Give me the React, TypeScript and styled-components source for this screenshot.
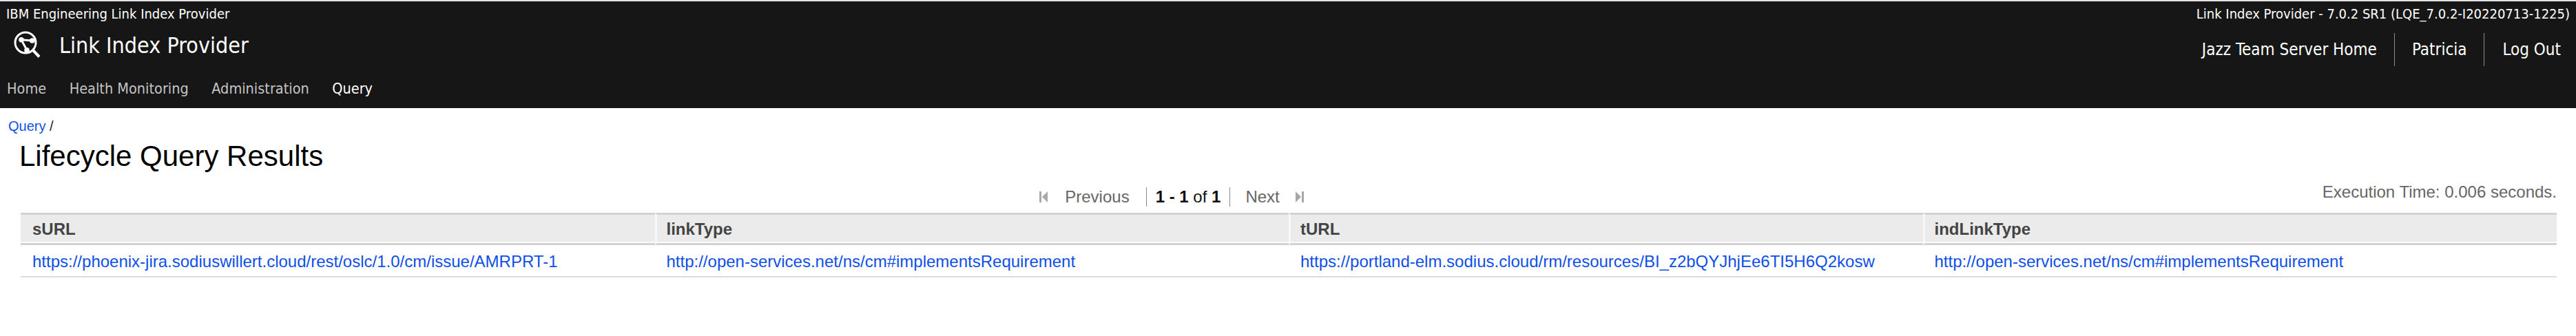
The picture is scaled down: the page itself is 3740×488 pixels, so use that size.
import React from 'react';
import styled, { createGlobalStyle } from 'styled-components';

const GlobalStyle = createGlobalStyle`
  html, body {
    margin: 0;
    padding: 0;
    background: #fff;
    font-family: "Liberation Sans", Arial, sans-serif;
  }
`;

const HEADER_FONT = `"DejaVu Sans Condensed", "DejaVu Sans", Tahoma, sans-serif`;

const Page = styled.div`
  width: 3740px;
  height: 488px;
  overflow: hidden;
  background: #fff;
`;

const Header = styled.header`
  height: 155px;
  background: #161616;
  border-top: 2px solid #e4e4e4;
  color: #fff;
  font-family: ${HEADER_FONT};
`;

const InfoBar = styled.div`
  display: flex;
  justify-content: space-between;
  height: 36px;
  align-items: center;
  padding: 0 9px;
  font-size: 20px;
`;

const BrandRow = styled.div`
  display: flex;
  justify-content: space-between;
  align-items: flex-start;
  height: 78px;
`;

const Brand = styled.div`
  display: flex;
  align-items: center;
  height: 56px;
  padding-left: 19px;
  gap: 25px;
  font-size: 32px;
`;

const LogoSvg = styled.svg`
  margin-top: -2px;
`;

const UserLinks = styled.div`
  display: flex;
  align-items: center;
  height: 48px;
  margin-top: 10px;
  padding-right: 22px;
`;

const UserLink = styled.a<{ $divider?: boolean }>`
  display: flex;
  align-items: center;
  height: 48px;
  padding: 0 25px;
  font-size: 24px;
  color: #fff;
  border-left: ${p => (p.$divider ? '1px solid #8a8a8a' : 'none')};
  &:last-child { padding-right: 0; padding-left: 26px; }
`;

const NavBar = styled.nav`
  display: flex;
  gap: 33.5px;
  padding-left: 10px;
`;

const NavItem = styled.a<{ $active?: boolean }>`
  font-size: 21.5px;
  color: ${p => (p.$active ? '#fff' : '#c4c4c4')};
`;

const Breadcrumb = styled.div`
  padding: 15px 0 0 12px;
  font-size: 20px;
  line-height: 22px;
  color: #222;
`;

const Link = styled.a`
  color: #0f4fe8;
  text-decoration: none;
`;

const Title = styled.h1`
  margin: 8px 0 0 28px;
  font-size: 42px;
  line-height: 50px;
  font-weight: 400;
  color: #000;
`;

const ResultsBar = styled.div`
  display: grid;
  grid-template-columns: 1fr auto 1fr;
  align-items: center;
  margin: 16px 28px 5px 30px;
  height: 36px;
`;

const Pager = styled.div`
  grid-column: 2;
  display: flex;
  align-items: center;
  margin-right: 340px;
  font-size: 24px;
  color: #666;
`;

const PagerIcon = styled.svg<{ $flip?: boolean }>`
  width: 14px;
  height: 18px;
  fill: #a8a8a8;
  transform: ${p => (p.$flip ? 'scaleX(-1)' : 'none')};
`;

const PagerLabel = styled.span<{ $side: 'prev' | 'next' }>`
  padding: ${p => (p.$side === 'prev' ? '0 24px 0 24px' : '0 22px 0 22px')};
`;

const PagerCount = styled.span`
  padding: 0 13px;
  height: 28px;
  line-height: 28px;
  color: #111;
  border-left: 1px solid #888;
  border-right: 1px solid #888;
  b { font-weight: 700; }
`;

const Timing = styled.div`
  grid-column: 3;
  justify-self: end;
  font-size: 24px;
  color: #666;
  transform: translateY(-7px);
`;

const Table = styled.table`
  margin-left: 30px;
  width: 3682px;
  border-collapse: separate;
  border-spacing: 0;
  table-layout: fixed;
`;

const HeadCell = styled.th`
  box-sizing: border-box;
  height: 47px;
  padding: 0 0 0 17px;
  text-align: left;
  font-size: 24px;
  font-weight: 700;
  color: #444;
  background: #ebebeb;
  border-top: 3px solid #d2d2d2;
  border-bottom: 3px solid #d2d2d2;
  box-shadow: inset 0 -2px 0 #fafafa;
  & + & {
    padding-left: 14px;
    border-left: 3px solid #f7f7f7;
  }
`;

const Cell = styled.td`
  box-sizing: border-box;
  height: 47px;
  padding: 3px 0 0 17px;
  font-size: 24px;
  white-space: nowrap;
  border-bottom: 2px solid #dcdcdc;
`;

const SkipIcon = ({ flip }: { flip?: boolean }) => (
  <PagerIcon viewBox="0 0 14 18" $flip={flip}>
    <rect x="1" y="1" width="3" height="16" />
    <path d="M13 1v16L5 9z" />
  </PagerIcon>
);

const columns = ['sURL', 'linkType', 'tURL', 'indLinkType'];
const row = [
  'https://phoenix-jira.sodiuswillert.cloud/rest/oslc/1.0/cm/issue/AMRPRT-1',
  'http://open-services.net/ns/cm#implementsRequirement',
  'https://portland-elm.sodius.cloud/rm/resources/BI_z2bQYJhjEe6TI5H6Q2kosw',
  'http://open-services.net/ns/cm#implementsRequirement',
];

const LogoMark = () => (
  <LogoSvg width="42" height="42" viewBox="0 0 42 42" fill="none" stroke="#fff" strokeWidth="3">
    <circle cx="18" cy="18" r="15" />
    <path d="M29 29l9 9.5" strokeWidth="4" />
    <path d="M12 13.7L27.7 15M12 13.7L20 28.7" strokeWidth="3" />
    <circle cx="12" cy="13.7" r="3.8" fill="#fff" stroke="none" />
    <circle cx="27.7" cy="15" r="3.8" fill="#fff" stroke="none" />
    <circle cx="20" cy="28.7" r="3.8" fill="#fff" stroke="none" />
  </LogoSvg>
);

export default function App() {
  return (
    <Page>
      <GlobalStyle />
      <Header>
        <InfoBar>
          <span>IBM Engineering Link Index Provider</span>
          <span>Link Index Provider - 7.0.2 SR1 (LQE_7.0.2-I20220713-1225)</span>
        </InfoBar>
        <BrandRow>
          <Brand>
            <LogoMark />
            <span>Link Index Provider</span>
          </Brand>
          <UserLinks>
            <UserLink>Jazz Team Server Home</UserLink>
            <UserLink $divider>Patricia</UserLink>
            <UserLink $divider>Log Out</UserLink>
          </UserLinks>
        </BrandRow>
        <NavBar>
          <NavItem>Home</NavItem>
          <NavItem>Health Monitoring</NavItem>
          <NavItem>Administration</NavItem>
          <NavItem $active>Query</NavItem>
        </NavBar>
      </Header>
      <Breadcrumb>
        <Link href="#">Query</Link> /
      </Breadcrumb>
      <Title>Lifecycle Query Results</Title>
      <ResultsBar>
        <Pager>
          <SkipIcon />
          <PagerLabel $side="prev">Previous</PagerLabel>
          <PagerCount>
            <b>1 - 1</b> of <b>1</b>
          </PagerCount>
          <PagerLabel $side="next">Next</PagerLabel>
          <SkipIcon flip />
        </Pager>
        <Timing>Execution Time: 0.006 seconds.</Timing>
      </ResultsBar>
      <Table>
        <thead>
          <tr>
            {columns.map(c => (
              <HeadCell key={c}>{c}</HeadCell>
            ))}
          </tr>
        </thead>
        <tbody>
          <tr>
            {row.map((v, i) => (
              <Cell key={i}>
                <Link href="#">{v}</Link>
              </Cell>
            ))}
          </tr>
        </tbody>
      </Table>
    </Page>
  );
}
